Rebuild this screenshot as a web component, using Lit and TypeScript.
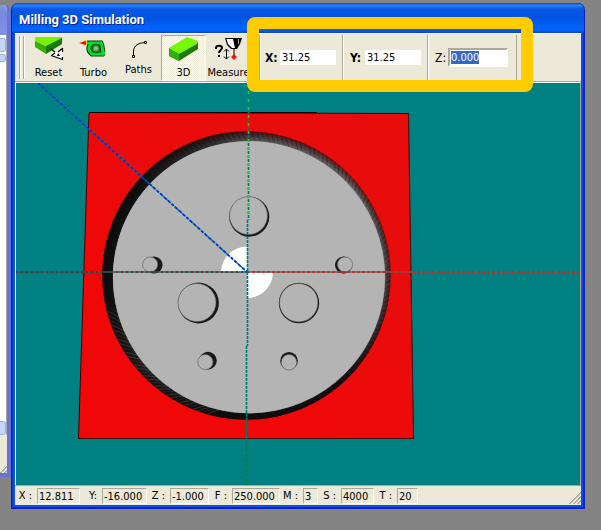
import { LitElement, html, css, svg } from "lit";
import { customElement, query } from "lit/decorators.js";

type Field = { label: string; value: string };

const STATUS: Field[] = [
  { label: "X :", value: "12.811" },
  { label: "Y:", value: "-16.000" },
  { label: "Z :", value: "-1.000" },
  { label: "F :", value: "250.000" },
  { label: "M :", value: "3" },
  { label: "S :", value: "4000" },
  { label: "T :", value: "20" },
];

const icons = {
  reset: svg`<svg viewBox="0 0 30 25" width="30" height="25">
    <path d="M1 1H28V3L13 10L1 5Z" fill="#74f400"/>
    <path d="M1 5L12 10V18L1 11Z" fill="#38b000"/>
    <path d="M12 10L28 2V8L12 18Z" fill="#187800"/>
    <path d="M19 19L28 13V23Z" fill="#fff"/>
    <path d="M17 13L21 16M17 19.500L28.500 23.500V21M18 19L21 17M24 16L29 12M28.500 13V16" fill="none" stroke="#000" stroke-width="1.2"/>
    <path d="M24 17L26 20L23 20Z" fill="#000"/>
  </svg>`,
  turbo: svg`<svg viewBox="0 0 30 25" width="30" height="25">
    <path d="M2 7L6 4L9 7L6 10Z" fill="#fc0"/><path d="M0 7L7 5V9Z" fill="#f00"/>
    <path d="M8 7H22C24 10 23 14 24 17H26M25 18H13C9 15 9 11 12 8" fill="none" stroke="#063c06" stroke-width="5"/>
    <path d="M8 7H22C24 10 23 14 24 17H26M25 18H13C9 15 9 11 12 8" fill="none" stroke="#00e030" stroke-width="3"/>
    <circle cx="17" cy="12.500" r="4" fill="#4c9c40" stroke="#0c5c0c" stroke-width="1.5"/>
    <circle cx="17" cy="12.500" r="2" fill="#8cc080"/>
  </svg>`,
  paths: svg`<svg viewBox="0 0 30 25" width="30" height="25">
    <path d="M9.500 20V15C10 9 15 7 21 6.500" fill="none" stroke="#000"/>
    <path d="M8.500 19.500h2v2h-2zM20.500 5.500h2v2h-2z" fill="#ece9d8" stroke="#000"/>
  </svg>`,
  block: svg`<svg viewBox="0 0 30 25" width="30" height="25">
    <path d="M0 13L10 17L29 6V13L10 25L0 20Z" fill="#207800"/>
    <path d="M0 12L18 1L29 5L28 8L10 18Z" fill="#78f800"/>
    <path d="M0 12L10 18V25L0 20Z" fill="#30b000"/>
  </svg>`,
  measure: svg`<svg viewBox="0 0 30 25" width="30" height="25">
    <path d="M2 13V12C2 9 8 9 8 12C8 14 5 14 5 17M5 19V21" fill="none" stroke="#000" stroke-width="2"/>
    <path d="M12.500 13V23M10 15.500L12.500 13L15 15.500M10 20.500L12.500 23L15 20.500" fill="none" stroke="#000"/>
    <path d="M11 2H28L26 8L23 13H17L13 9Z" fill="#000"/>
    <path d="M12.500 3H19L21 12H18L14 8Z" fill="#fff"/><path d="M24.500 3V8" stroke="#aaa"/>
    <path d="M20 13V20" stroke="#000"/>
    <path d="M20 18L23 21L20 24L17 21Z" fill="#f01010"/>
  </svg>`,
};

const STOPS: [number, number][] = [
  [0, 0.3], [20, 0.5], [45, 0.9], [90, 0.96], [115, 0.92], [135, 0.75],
  [155, 0.88], [180, 0.96], [215, 0.94], [235, 0.8], [255, 0.65], [270, 0.35], [315, 0.1], [360, 0.3],
];

function shade(deg: number): number {
  const i = STOPS.findIndex(([d]) => d > deg);
  const [d0, a0] = STOPS[i - 1];
  const [d1, a1] = STOPS[i];
  return a0 + ((a1 - a0) * (deg - d0)) / (d1 - d0);
}

function rimPoint(deg: number, outer: boolean): string {
  const t = (deg * Math.PI) / 180;
  const [cx, cy, r] = outer ? [246.5, 275.5, 144.2] : [249, 277.2, 136.2];
  return `${(cx + r * Math.cos(t)).toFixed(1)} ${(cy + r * Math.sin(t)).toFixed(1)}`;
}

const rim = Array.from({ length: 180 }, (_, i) => {
  const a = i * 2;
  const b = a + 2.2;
  const d = `M${rimPoint(a, true)}L${rimPoint(b, true)}L${rimPoint(b, false)}L${rimPoint(a, false)}Z`;
  const lower = a > 105 && a < 170;
  const tick = `M${rimPoint(a, true)}L${rimPoint(lower ? a - 3 : a + 1, false)}`;
  return svg`<path d=${d} fill="#0a0a0a" fill-opacity=${shade(a).toFixed(2)}/>
    <path d=${tick} stroke=${lower ? "#666" : "#111"} stroke-opacity=${a % 3 ? 0.5 : 0.25} stroke-width="0.8"/>`;
});

/* shadow centre and radius, then floor centre and radius */
const HOLES = [
  [249.3, 216.7, 20, 248.5, 215.6, 19],
  [198.5, 303, 20.4, 197, 302.6, 19],
  [299, 303, 20.2, 298.7, 302.7, 19.2],
  [154, 265, 8.6, 150.2, 264.5, 7.6],
  [343.6, 265, 8.6, 345, 264.5, 7.6],
  [208, 360.6, 8.8, 205.4, 362, 7.6],
  [289, 360.7, 8.8, 289, 362.3, 7.8],
];

@customElement("app-root")
export class AppRoot extends LitElement {
  @query("#z") private zInput!: HTMLInputElement;

  static styles = css`
    :host {
      display: flex;
      align-items: flex-start;
      min-height: 100vh;
      box-sizing: border-box;
      background: #848484;
      padding: 3px 16px 21px 0;
      font: 11px/14px "DejaVu Sans Condensed", "Noto Sans", sans-serif;
      color: #000;
      overflow: hidden;
    }
    * { box-sizing: border-box; }
    .behind {
      flex: none;
      align-self: stretch;
      width: 11px;
      margin: 2px 0 32px;
      display: flex;
      flex-direction: column;
      background: #fff;
      border: solid #6674d6;
      border-width: 0 4px 4px 0;
      border-top-right-radius: 7px;
      overflow: hidden;
    }
    .behind-title { flex: none; height: 30px; margin-right: -4px; background: linear-gradient(#8496e4, #7688e0 30%, #8094e8); }
    .behind-body { flex: 1; display: flex; flex-direction: column; border-right: 1px solid #aaa89c; padding-top: 3px; }
    .thumb { height: 14px; background: #c4d4fa; border: 1px solid #98b0e8; border-left: 0; border-radius: 0 3px 3px 0; }
    .thumb.short { height: 8px; margin-top: 2px; }
    .thumb.last { margin-top: auto; }
    .behind-foot { flex: none; height: 38px; background: #ece9d8; display: flex; align-items: flex-end; }
    .window {
      flex: 1;
      min-width: 0;
      background: #0a50e8;
      border: solid #0a20b8;
      border-width: 0 1px 1px;
      border-radius: 7px 7px 0 0;
      box-shadow: inset 1px 0 #0c38dc, inset -1px -1px #0828c8;
      padding: 0 3px 3px;
      display: flex;
      flex-direction: column;
    }
    .title {
      height: 30px;
      margin: 0 -3px;
      padding: 2px 7px 0;
      border-radius: 7px 7px 0 0;
      background: linear-gradient(#0a48cc, #2a80f8 8%, #0a58e4 20%, #0054e2 50%, #0062fa 80%, #0064fc 90%, #0040c4);
      color: #fff;
      font: bold 13px/30px Roboto, "Noto Sans", sans-serif;
      text-shadow: 1px 1px #0a1c80;
      white-space: nowrap;
    }
    h1 { margin: 0; font: inherit; }
    .toolbar {
      display: flex;
      height: 49px;
      padding: 1px 0;
      background: #ece9d8;
      border-top: 1px solid #fff;
      border-bottom: 1px solid #aca899;
    }
    .grip { width: 5px; margin: 1px 2px 1px 4px; border: solid #aca899; border-width: 0 1px; box-shadow: inset 1px 0 #fff, 1px 0 #fff; }
    .tool {
      width: 45px;
      height: 46px;
      padding: 0;
      border: 1px solid transparent;
      background: none;
      font: inherit;
      color: inherit;
      display: flex;
      flex-direction: column;
      align-items: center;
      justify-content: space-between;
      white-space: nowrap;
    }
    .tool svg { display: block; }
    .tool.raised { padding-bottom: 3px; }
    .tool.pressed {
      border-color: #aca899 #fff #fff #aca899;
      background: repeating-conic-gradient(#fff 0 25%, #ece9d8 0 50%) 0 0 / 2px 2px;
    }
    .coords { position: relative; display: flex; width: 262px; margin-left: 8px; z-index: 1; }
    .coords::after {
      content: "";
      position: absolute;
      inset: -18px -12px -12px;
      border: 12px solid #fc0;
      border-radius: 8px;
      pointer-events: none;
    }
    .coord {
      display: flex;
      align-items: center;
      gap: 2px;
      width: 83px;
      padding-left: 5px;
      border-left: 1px solid #aca899;
      box-shadow: inset 1px 0 #fff;
      font-size: 12px;
    }
    .coord + .coord { width: 85px; padding-left: 7px; }
    .coord.active { width: 89px; }
    .coord label { width: 13px; }
    .end { width: 2px; border-left: 1px solid #aca899; }
    .strong { font-weight: bold; }
    .coord input {
      width: 56px;
      height: 15px;
      padding: 0 2px;
      border: 0;
      outline: 0;
      background: #fff;
      font: 11px/15px "DejaVu Sans Condensed", "Noto Sans", sans-serif;
      border-radius: 0;
    }
    .coord .sunken { width: 60px; height: 19px; margin-left: -2px; padding: 0 1px; border: 2px solid; border-color: #aca899 #fff #fff #aca899; }
    .coord input::selection { background: #316ac5; color: #fff; }
    .scene { display: block; width: 100%; height: auto; background: #008080; border: solid #fff; border-width: 1px 0 0 1px; border-right: 1px solid #aca899; }
    .status {
      display: grid;
      grid-template-columns: 22px 43px 22px 45px 23px 39px 23px 48px 23px 15px 23px 33px 23px 21px 1fr;
      height: 20px;
      padding: 2px 0 1px;
      background: #ece9d8;
      border-top: 1px solid #aca899;
      line-height: 16px;
      white-space: nowrap;
    }
    .status label { text-align: right; padding-right: 5px; }
    .status output { border: 1px solid; border-color: #aca899 #fff #fff #aca899; padding-left: 1px; overflow: hidden; }
    .size { justify-self: end; align-self: end; display: block; flex: none; }
  `;

  firstUpdated() {
    this.zInput.focus();
    this.zInput.select();
  }

  private grip = () => svg`<svg class="size" viewBox="0 0 12 12" width="12" height="12">
    <path d="M0 12L12 0M4 12L12 4M8 12L12 8" stroke="#aca899" stroke-width="2"/>
    <path d="M-1 12L12 -1M3 12L12 3M7 12L12 7" stroke="#fff"/>
  </svg>`;

  render() {
    return html`
      <div class="behind">
        <div class="behind-title"></div>
        <div class="behind-body">
          <div class="thumb"></div>
          <div class="thumb short"></div>
          <div class="thumb last"></div>
        </div>
        <div class="behind-foot">${this.grip()}</div>
      </div>
      <main class="window">
        <header class="title"><h1>Milling 3D Simulation</h1></header>
        <div class="toolbar" role="toolbar">
          <div class="grip"></div>
          <button class="tool">${icons.reset}<span>Reset</span></button>
          <button class="tool">${icons.turbo}<span>Turbo</span></button>
          <button class="tool raised">${icons.paths}<span>Paths</span></button>
          <button class="tool pressed" aria-pressed="true">${icons.block}<span>3D</span></button>
          <button class="tool">${icons.measure}<span>Measure</span></button>
          <div class="coords">
            <div class="coord"><label class="strong" for="x">X:</label><input id="x" value="31.25" /></div>
            <div class="coord"><label class="strong" for="y">Y:</label><input id="y" value="31.25" /></div>
            <div class="coord active"><label for="z">Z:</label><input id="z" class="sunken" value="0.000" /></div>
            <div class="end"></div>
          </div>
        </div>
        ${this.scene()}
        <footer class="status">
          ${STATUS.map((f, i) => html`<label for="s${i}">${f.label}</label><output id="s${i}">${f.value}</output>`)}
          ${this.grip()}
        </footer>
      </main>
    `;
  }

  private scene() {
    return svg`<svg class="scene" viewBox="16 83 564 402">
      <defs>
        <radialGradient id="wall" gradientUnits="userSpaceOnUse" cx="247.500" cy="276" r="144">
          <stop offset="0.93" stop-color="#9a9a9a"/>
          <stop offset="0.97" stop-color="#5c5252"/>
          <stop offset="1" stop-color="#7a1010"/>
        </radialGradient>
        <linearGradient id="stock" x1="0" y1="1" x2="1" y2="0">
          <stop offset="0.3" stop-color="#f00808"/>
          <stop offset="0.7" stop-color="#e80c0c"/>
        </linearGradient>
      </defs>
      <path d="M89 112.500L408.500 113.500L413.500 438.500H78.500Z" fill="url(#stock)" stroke="#400" stroke-width="1"/>
      <path d="M89 112.500H317" stroke="#000"/>
      <circle cx="246.500" cy="275.500" r="144.200" fill="url(#wall)"/>
      ${rim}
      <circle cx="249" cy="277.200" r="136" fill="#b4b4b4"/>
      ${HOLES.map(([x, y, r, fx, fy, fr]) => svg`
        <circle cx=${x} cy=${y} r=${r} fill="#181818"/>
        <circle cx=${fx} cy=${fy} r=${fr} fill="#b4b4b4" stroke="#555" stroke-width="0.6"/>`)}
      <path d="M247 272H221A26 26 0 0 1 247 246.500ZM247 272H273A26 26 0 0 1 247 298Z" fill="#fff"/>
      <path d="M16 272H247" stroke="#1c6464" stroke-width="1.500"/>
      <path d="M247 272H580" stroke="#407070" stroke-width="1.500"/>
      <path d="M16 272H247" stroke="#7a2020" stroke-width="1.500" stroke-dasharray="2 3"/>
      <path d="M247 272H580" stroke="#f01010" stroke-width="1.500" stroke-dasharray="3 2"/>
      <path d="M248.500 83V220M247.500 220V346M246.500 346V449" stroke="#007868" stroke-width="1.600" stroke-dasharray="3 1"/>
      <path d="M248.500 83V220" stroke="#00e020" stroke-width="1.600" stroke-dasharray="3 5"/>
      <path d="M246.500 449V485" stroke="#008020" stroke-width="1.500" stroke-dasharray="2 3"/>
      <path d="M38 83L247 272" stroke="#008080" stroke-width="1.500" stroke-dasharray="3 1"/>
      <path d="M38 83L247 272" stroke="#0030e0" stroke-width="1.700" stroke-dasharray="3 2"/>
    </svg>`;
  }
}
